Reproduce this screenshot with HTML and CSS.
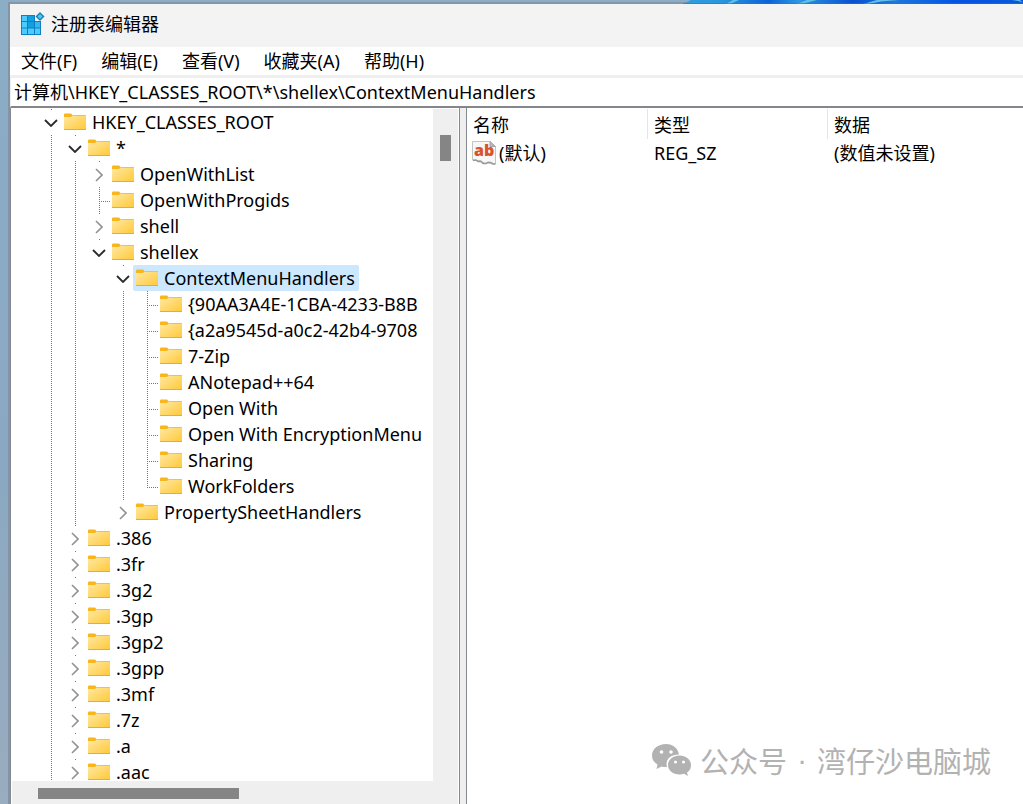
FILE: index.html
```html
<!DOCTYPE html>
<html lang="zh-CN">
<head>
<meta charset="utf-8">
<title>注册表编辑器</title>
<link rel="stylesheet" href="styles.css">
</head>
<body>
<svg class="defs" aria-hidden="true">
  <defs>
    <linearGradient id="paper" x1="0" y1="0" x2="1" y2="1">
      <stop offset="0" stop-color="#ffe9a6"/><stop offset="1" stop-color="#ffc937"/>
    </linearGradient>
    <linearGradient id="bloom" x1="0" x2="1" y1="0" y2="0">
      <stop offset="0" stop-color="#2f9fe0"/><stop offset=".12" stop-color="#2a94dd"/><stop offset=".25" stop-color="#0b62d8"/>
      <stop offset=".34" stop-color="#2c97e0"/><stop offset=".5" stop-color="#0a4fd0"/><stop offset=".62" stop-color="#1e78dc"/>
      <stop offset=".8" stop-color="#0554e4"/><stop offset="1" stop-color="#0a58d8"/>
    </linearGradient>
    <symbol id="folder" viewBox="0 0 22 18">
      <path d="M0 1.500Q0 .5 1 .5H7L8.500 2V5H0Z" fill="#f8b61c"/>
      <path d="M0 4H7L9 2H22V17H0Z" fill="url(#paper)"/>
      <path d="M0 16.500H22" stroke="#e9ad2c"/>
      <path d="M8.500 2.500H22" stroke="#f3c04a"/>
    </symbol>
    <symbol id="down" viewBox="0 0 14 8"><path d="M1 1L7 7L13 1" fill="none" stroke="#2b2b2b" stroke-width="1.800"/></symbol>
    <symbol id="right" viewBox="0 0 8 14"><path d="M1 1L7 7L1 13" fill="none" stroke="#929292" stroke-width="1.600"/></symbol>
  </defs>
</svg>
<div class="wallpaper"><svg preserveAspectRatio="none" viewBox="0 0 340 4">
  <path d="M0 4L8 0H340V4Z" fill="url(#bloom)"/>
  <path d="M43 4L50 0H56L47 4ZM114 4L124 0H134L118 4ZM180 4L194 0H216Q196 1 186 4ZM329 0Q337 1 340 3L337 0Z" fill="#62bfe6"/>
  <path d="M0 3.500H340" stroke="#3f6f9c" opacity=".55"/>
</svg></div>
<main class="window">
  <header class="titlebar">
    <svg class="app-icon" viewBox="0 0 24 24" aria-hidden="true">
      <path d="M0 3H14V9H20V23H0Z" fill="#0f7fc0"/>
      <g fill="#4ccbff">
        <path d="M1 4H6V9H1ZM1 10H6V15.500H1ZM1 16.500H6V22H1ZM7 16.500H13V22H7ZM14 16.500H19V22H14Z"/>
        <path d="M14 10H19V15.500H14Z" fill="#35b8f2"/>
      </g>
      <path d="M7 4H13V9H7ZM7 10H13V15.500H7Z" fill="#12a0e0"/>
      <path d="M19 0L23.500 4.500L19 9L14.500 4.500Z" fill="#1683b8"/>
      <path d="M19 2L21.500 4.500L19 7L16.500 4.500Z" fill="#5cc4ec"/>
    </svg>
    <h1>注册表编辑器</h1>
  </header>
  <nav class="menubar">
    <button>文件(F)</button><button>编辑(E)</button><button>查看(V)</button><button>收藏夹(A)</button><button>帮助(H)</button>
  </nav>
  <input class="address" aria-label="地址" value="计算机\HKEY_CLASSES_ROOT\*\shellex\ContextMenuHandlers">
  <div class="panes">
    <section class="tree-pane">
      <div class="tree-row">
        <div class="tree-view">
          <ul class="tree">
            <li><div class="item"><button class="toggle" aria-label="折叠"><svg class="down"><use href="#down"/></svg></button><span class="label"><svg class="folder"><use href="#folder"/></svg>HKEY_CLASSES_ROOT</span></div>
              <ul>
                <li><div class="item"><button class="toggle" aria-label="折叠"><svg class="down"><use href="#down"/></svg></button><span class="label"><svg class="folder"><use href="#folder"/></svg>*</span></div>
                  <ul>
                    <li><div class="item"><button class="toggle" aria-label="展开"><svg class="right"><use href="#right"/></svg></button><span class="label"><svg class="folder"><use href="#folder"/></svg>OpenWithList</span></div></li>
                    <li><div class="item leaf"><span class="label"><svg class="folder"><use href="#folder"/></svg>OpenWithProgids</span></div></li>
                    <li><div class="item"><button class="toggle" aria-label="展开"><svg class="right"><use href="#right"/></svg></button><span class="label"><svg class="folder"><use href="#folder"/></svg>shell</span></div></li>
                    <li class="end"><div class="item"><button class="toggle" aria-label="折叠"><svg class="down"><use href="#down"/></svg></button><span class="label"><svg class="folder"><use href="#folder"/></svg>shellex</span></div>
                      <ul>
                        <li><div class="item"><button class="toggle" aria-label="折叠"><svg class="down"><use href="#down"/></svg></button><span class="label selected"><svg class="folder"><use href="#folder"/></svg>ContextMenuHandlers</span></div>
                          <ul>
                            <li><div class="item leaf"><span class="label"><svg class="folder"><use href="#folder"/></svg>{90AA3A4E-1CBA-4233-B8B</span></div></li>
                            <li><div class="item leaf"><span class="label"><svg class="folder"><use href="#folder"/></svg>{a2a9545d-a0c2-42b4-9708</span></div></li>
                            <li><div class="item leaf"><span class="label"><svg class="folder"><use href="#folder"/></svg>7-Zip</span></div></li>
                            <li><div class="item leaf"><span class="label"><svg class="folder"><use href="#folder"/></svg>ANotepad++64</span></div></li>
                            <li><div class="item leaf"><span class="label"><svg class="folder"><use href="#folder"/></svg>Open With</span></div></li>
                            <li><div class="item leaf"><span class="label"><svg class="folder"><use href="#folder"/></svg>Open With EncryptionMenu</span></div></li>
                            <li><div class="item leaf"><span class="label"><svg class="folder"><use href="#folder"/></svg>Sharing</span></div></li>
                            <li class="end"><div class="item leaf"><span class="label"><svg class="folder"><use href="#folder"/></svg>WorkFolders</span></div></li>
                          </ul>
                        </li>
                        <li class="end"><div class="item"><button class="toggle" aria-label="展开"><svg class="right"><use href="#right"/></svg></button><span class="label"><svg class="folder"><use href="#folder"/></svg>PropertySheetHandlers</span></div></li>
                      </ul>
                    </li>
                  </ul>
                </li>
                <li><div class="item"><button class="toggle" aria-label="展开"><svg class="right"><use href="#right"/></svg></button><span class="label"><svg class="folder"><use href="#folder"/></svg>.386</span></div></li>
                <li><div class="item"><button class="toggle" aria-label="展开"><svg class="right"><use href="#right"/></svg></button><span class="label"><svg class="folder"><use href="#folder"/></svg>.3fr</span></div></li>
                <li><div class="item"><button class="toggle" aria-label="展开"><svg class="right"><use href="#right"/></svg></button><span class="label"><svg class="folder"><use href="#folder"/></svg>.3g2</span></div></li>
                <li><div class="item"><button class="toggle" aria-label="展开"><svg class="right"><use href="#right"/></svg></button><span class="label"><svg class="folder"><use href="#folder"/></svg>.3gp</span></div></li>
                <li><div class="item"><button class="toggle" aria-label="展开"><svg class="right"><use href="#right"/></svg></button><span class="label"><svg class="folder"><use href="#folder"/></svg>.3gp2</span></div></li>
                <li><div class="item"><button class="toggle" aria-label="展开"><svg class="right"><use href="#right"/></svg></button><span class="label"><svg class="folder"><use href="#folder"/></svg>.3gpp</span></div></li>
                <li><div class="item"><button class="toggle" aria-label="展开"><svg class="right"><use href="#right"/></svg></button><span class="label"><svg class="folder"><use href="#folder"/></svg>.3mf</span></div></li>
                <li><div class="item"><button class="toggle" aria-label="展开"><svg class="right"><use href="#right"/></svg></button><span class="label"><svg class="folder"><use href="#folder"/></svg>.7z</span></div></li>
                <li><div class="item"><button class="toggle" aria-label="展开"><svg class="right"><use href="#right"/></svg></button><span class="label"><svg class="folder"><use href="#folder"/></svg>.a</span></div></li>
                <li><div class="item"><button class="toggle" aria-label="展开"><svg class="right"><use href="#right"/></svg></button><span class="label"><svg class="folder"><use href="#folder"/></svg>.aac</span></div></li>
              </ul>
            </li>
          </ul>
        </div>
        <div class="vscroll"><div class="thumb"></div></div>
      </div>
      <div class="hscroll"><div class="thumb"></div></div>
    </section>
    <section class="values">
      <table>
        <thead><tr><th>名称</th><th>类型</th><th>数据</th></tr></thead>
        <tbody><tr>
          <td class="name"><div class="value-name"><svg class="string-icon" viewBox="0 0 24 24" aria-hidden="true">
            <path d="M.5 .5H18L23.500 5.500V22.500H21L19 21H16L14 22.500L11 21.500L9 19.500H4L3 19H.5Z" fill="#f7f7f7" stroke="#c4c4c4"/>
            <path d="M18 .5V5.500H23.500Z" fill="#b8b8b8" stroke="#a5a5a5"/>
            <path d="M1 19.500L4 19L6 20.500H9L11 22.500H14L16 21.500L19 22L21 23H23.500" fill="none" stroke="#999" stroke-width="1.500"/>
            <text x="2" y="15">ab</text>
          </svg>(默认)</div></td>
          <td>REG_SZ</td><td>(数值未设置)</td>
        </tr></tbody>
      </table>
    </section>
  </div>
</main>
<div class="watermark">
  <svg viewBox="0 0 40 32" aria-hidden="true">
    <path d="M14 0C6 0 0 5 0 11.500C0 15.500 2 18.500 5.500 20.500L4.500 25L9.500 22.500Q12 23.200 15 23C13 16 18 10.500 27 10.500C26 4.500 21 0 14 0Z" fill="#b2b2b2"/>
    <path d="M27.500 11.500C21 11.500 16 15.800 16 21C16 26.500 21 30.500 27.500 30.500Q30 30.500 32 29.800L36 32L35 28.500C38 26.500 39 24 39 21C39 15.800 34 11.500 27.500 11.500Z" fill="#b2b2b2"/>
    <g fill="#fff"><circle cx="9.500" cy="8" r="1.800"/><circle cx="19" cy="8" r="1.800"/><circle cx="23.500" cy="18" r="1.500"/><circle cx="31.500" cy="18" r="1.500"/></g>
  </svg>
  <span>公众号</span><span class="dot">·</span><span>湾仔沙电脑城</span>
</div>
</body>
</html>
```
FILE: styles.css
```css
* { box-sizing: border-box; }
body {
  margin: 0;
  height: 100vh;
  overflow: hidden;
  display: flex;
  flex-direction: column;
  padding-left: 8px;
  background: linear-gradient(#8badc6, #8ba8c2 60%, #9aacbf);
  font: 18px/26px "Noto Sans", "Noto Sans CJK SC", sans-serif;
  color: #000;
}
button, input { font: inherit; color: inherit; border: 0; padding: 0; background: none; }
ul { list-style: none; margin: 0; padding: 0; }
.defs { position: absolute; width: 0; height: 0; }
.wallpaper { height: 4px; flex: none; border-bottom: 2px solid #8496a8; }
.wallpaper svg { position: absolute; top: 0; right: 0; width: 340px; height: 4px; }
.window {
  flex: 1;
  min-height: 0;
  display: flex;
  flex-direction: column;
  border-left: 2px solid #8394a8;
  background: #fff;
}
.titlebar { height: 43px; flex: none; display: flex; align-items: center; gap: 6px; padding: 0 11px 4px; background: #f3f3f3; }
.app-icon { width: 24px; height: 24px; }
h1 { margin: 0; font-size: 18px; font-weight: 400; line-height: 26px; }
.menubar { height: 31px; flex: none; display: flex; gap: 24px; padding: 0 11px 1px; border-bottom: 3px solid #efefef; white-space: nowrap; }
.address { width: 100%; height: 30px; flex: none; padding: 0 3px 2px; border-bottom: 2px solid #85868b; border-left: 1px solid #eee; outline: 0; }
.panes { flex: 1; min-height: 0; display: flex; }
.tree-pane {
  width: 450px;
  flex: none;
  display: flex;
  flex-direction: column;
  border: 1px solid #848a92;
  border-width: 0 1px;
  padding: 1px 1px 0;
}
.tree-row { flex: 1; min-height: 0; display: flex; }
.tree-view { flex: 1; min-width: 0; overflow: hidden; padding-left: 27px; }
.tree li {
  background: repeating-linear-gradient(#777 0 1px, transparent 1px 2px) 12px 0 / 1px 100% no-repeat;
}
.tree li.end { background-size: 1px 14px; }
.tree ul { padding-left: 24px; }
.item { display: flex; height: 26px; white-space: nowrap; }
.toggle { width: 24px; height: 25px; margin-top: 1px; padding-right: 1px; flex: none; display: flex; align-items: center; justify-content: center; background: #fff; }
.toggle .down { width: 14px; height: 8px; }
.toggle .right { width: 8px; height: 14px; }
.leaf { padding-left: 24px; background: repeating-linear-gradient(90deg, #777 0 1px, transparent 1px 2px) 12px 14px / 12px 1px no-repeat; }
.label { display: flex; align-items: center; gap: 6px; margin-left: -2px; padding: 0 4px 0 3px; border-radius: 2px; }
.selected { background: #cce8ff; }
.folder { width: 22px; height: 18px; flex: none; }
.vscroll { width: 25px; flex: none; background: #efefef; padding: 26px 7px 0; }
.vscroll .thumb { height: 26px; background: #858585; }
.hscroll { height: 23px; flex: none; background: #efefef; padding: 7px 26px 5px; }
.hscroll .thumb { width: 201px; height: 11px; background: #858585; }
.values {
  flex: 1;
  min-width: 0;
  margin-left: 6px;
  border-left: 1px solid #848a92;
  box-shadow: -6px 0 #efefef;
}
table { width: 100%; table-layout: fixed; border-collapse: separate; border-spacing: 0; margin-top: 1px; }
th, td { padding: 0 6px; text-align: left; font-weight: 400; white-space: nowrap; }
th { height: 30px; padding-top: 2px; }
th:first-child { width: 181px; }
th:nth-child(2) { width: 180px; }
th:not(:last-child) { border-right: 1px solid #e5e5e5; }
td { height: 28px; }
td.name { padding-left: 5px; }
.value-name { display: flex; align-items: center; gap: 3px; }
.string-icon { width: 24px; height: 24px; }
.string-icon text { font: 800 16px "Open Sans", "Noto Sans", sans-serif; fill: #d9532c; }
.watermark {
  position: absolute;
  right: 32px;
  bottom: 24px;
  display: flex;
  align-items: center;
  gap: 8px;
  color: #b2b2b2;
  font: 29px/40px "Noto Sans CJK SC", sans-serif;
}
.watermark svg { width: 40px; height: 32px; }
.watermark .dot { width: 14px; text-align: center; font-family: "Liberation Sans", sans-serif; }
```
